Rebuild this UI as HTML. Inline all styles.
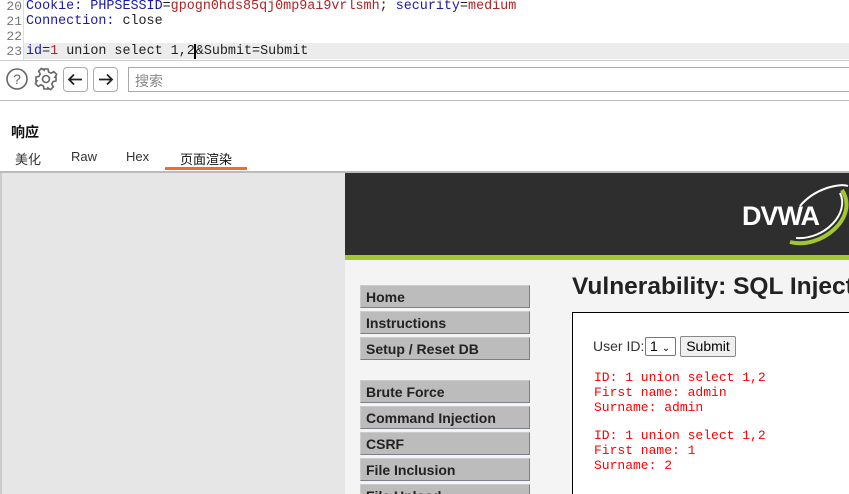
<!DOCTYPE html>
<html><head><meta charset="utf-8"><style>
*{margin:0;padding:0;box-sizing:border-box}
html,body{width:849px;height:494px;overflow:hidden}
body{background:#fff;font-family:"Liberation Sans","Noto Sans CJK SC",sans-serif;position:relative}
.ln{position:absolute;left:0;width:22px;text-align:right;font:13px "Liberation Mono",monospace;color:#777}
.code{position:absolute;left:26px;font:13.4px "Liberation Mono",monospace;color:#222;white-space:pre}
.k{color:#1a1aa6}.v{color:#b22222}
.abs{position:absolute}
.menu{position:absolute;left:360px;width:170px;height:23px;background:#bcbcbc;border:1px solid #999;border-color:#ccc #7a7f8a #7a7f8a #ccc;font-weight:bold;font-size:14px;color:#222;padding:3px 0 0 5px}
.red{position:absolute;left:594px;font:13px "Liberation Mono",monospace;color:#f00;white-space:pre;line-height:15px}
#clip{position:absolute;left:0;top:0;width:849px;height:494px;overflow:hidden}
</style></head><body><div id="clip">
<div class="abs" style="left:23px;top:0;width:1px;height:60px;background:#ddd"></div>
<div class="abs" style="left:24px;top:43px;width:825px;height:16px;background:#ececec"></div>
<div class="ln" style="top:-1px">20</div><div class="code" style="top:-1px"><span class="k">Cookie:</span> <span class="k">PHPSESSID</span>=<span class="v">gpogn0hds85qj0mp9ai9vrlsmh</span>; <span class="k">security</span>=<span class="v">medium</span></div>
<div class="ln" style="top:14px">21</div><div class="code" style="top:14px"><span class="k">Connection:</span> close</div>
<div class="ln" style="top:29px">22</div>
<div class="ln" style="top:44px">23</div><div class="code" style="top:44px"><span class="k">id</span>=<span class="v">1</span> union select 1,2<span style="border-left:2px solid #000;margin-left:-1px"></span>&amp;Submit=Submit</div>
<div class="abs" style="left:0;top:60px;width:849px;height:1px;background:#ccc"></div>
<svg class="abs" style="left:5px;top:67px" width="24" height="24"><circle cx="12" cy="12" r="10" fill="none" stroke="#666" stroke-width="1.6"/><text x="12" y="17" text-anchor="middle" font-size="14" fill="#666" font-family="Liberation Sans">?</text></svg>
<svg class="abs" style="left:34px;top:67px" width="24" height="24" fill="none" stroke="#666" stroke-width="1.6"><circle cx="12" cy="12" r="3.5"/><path d="M10 2h4l.6 3 2.5 1.2 2.7-1.6 2.8 2.8-1.6 2.7L22 10v4l-3 .6-1.2 2.5 1.6 2.7-2.8 2.8-2.7-1.6L14 22h-4l-.6-3-2.5-1.2-2.7 1.6-2.8-2.8 1.6-2.7L2 14v-4l3-.6 1.2-2.5-1.6-2.7 2.8-2.8 2.7 1.6z"/></svg>
<div class="abs" style="left:63px;top:67px;width:25px;height:25px;border:1px solid #aaa;border-radius:4px"></div>
<svg class="abs" style="left:63px;top:67px" width="25" height="25" fill="none" stroke="#222" stroke-width="1.8"><path d="M19 12.5H6M11 7.5l-5 5 5 5"/></svg>
<div class="abs" style="left:93px;top:67px;width:25px;height:25px;border:1px solid #aaa;border-radius:4px"></div>
<svg class="abs" style="left:93px;top:67px" width="25" height="25" fill="none" stroke="#222" stroke-width="1.8"><path d="M6 12.5h13M14 7.5l5 5-5 5"/></svg>
<div class="abs" style="left:128px;top:67px;width:730px;height:25px;border:1px solid #aaa;padding:3px 6px;font-size:14px;color:#888">搜索</div>
<div class="abs" style="left:0;top:100px;width:849px;height:1px;background:#bbb"></div>
<div class="abs" style="left:11px;top:122px;font-size:14px;font-weight:bold;color:#111">响应</div>
<div class="abs" style="left:15px;top:149px;font-size:13px;color:#333">美化</div>
<div class="abs" style="left:71px;top:149px;font-size:13px;color:#333">Raw</div>
<div class="abs" style="left:126px;top:149px;font-size:13px;color:#333">Hex</div>
<div class="abs" style="left:180px;top:149px;font-size:13px;color:#111">页面渲染</div>
<div class="abs" style="left:165px;top:167px;width:82px;height:3px;background:#f06a35"></div>
<div class="abs" style="left:0;top:171px;width:849px;height:2px;background:#bbb"></div>
<div class="abs" style="left:0;top:173px;width:345px;height:321px;background:#e6e6e6;border-left:2px solid #ccc"></div>
<div class="abs" style="left:345px;top:173px;width:504px;height:321px;background:#f4f4f4"></div>
<div class="abs" style="left:345px;top:173px;width:504px;height:82px;background:#2e2e2e"></div>
<div class="abs" style="left:345px;top:255px;width:504px;height:5px;background:#a2c831"></div>
<svg class="abs" style="left:730px;top:178px" width="119" height="75"><path d="M60 64 C90 72 130 40 112 12" fill="none" stroke="#a2c831" stroke-width="4"/><path d="M66 60 C95 62 120 35 110 15" fill="none" stroke="#fff" stroke-width="2"/><path d="M70 28 C85 10 110 5 118 8" fill="none" stroke="#fff" stroke-width="2"/><text x="12" y="47" font-family="Liberation Sans" font-weight="bold" font-size="27" fill="#fff" letter-spacing="-1">DVWA</text></svg>
<div class="menu" style="top:285px">Home</div>
<div class="menu" style="top:311px">Instructions</div>
<div class="menu" style="top:337px">Setup / Reset DB</div>
<div class="menu" style="top:380px">Brute Force</div>
<div class="menu" style="top:406px">Command Injection</div>
<div class="menu" style="top:432px">CSRF</div>
<div class="menu" style="top:458px">File Inclusion</div>
<div class="menu" style="top:484px">File Upload</div>
<div class="abs" style="left:572px;top:273px;font-size:24.5px;font-weight:bold;color:#222;white-space:nowrap">Vulnerability: SQL Injection</div>
<div class="abs" style="left:572px;top:312px;width:290px;height:190px;background:#fff;border:1px solid #000"></div>
<div class="abs" style="left:593px;top:338px;font-size:14px;color:#333">User ID:</div>
<div class="abs" style="left:645px;top:337px;width:31px;height:19px;border:1px solid #777;border-radius:2px;background:#fff;font-size:14px;padding:0 0 0 4px">1 <span style="font-size:10px">&#8964;</span></div>
<div class="abs" style="left:680px;top:336px;width:56px;height:21px;border:1px solid #888;border-radius:2px;background:#efefef;font-size:14px;text-align:center;line-height:19px">Submit</div>
<div class="red" style="top:370px">ID: 1 union select 1,2
First name: admin
Surname: admin</div>
<div class="red" style="top:428px">ID: 1 union select 1,2
First name: 1
Surname: 2</div>
</div></body></html>
